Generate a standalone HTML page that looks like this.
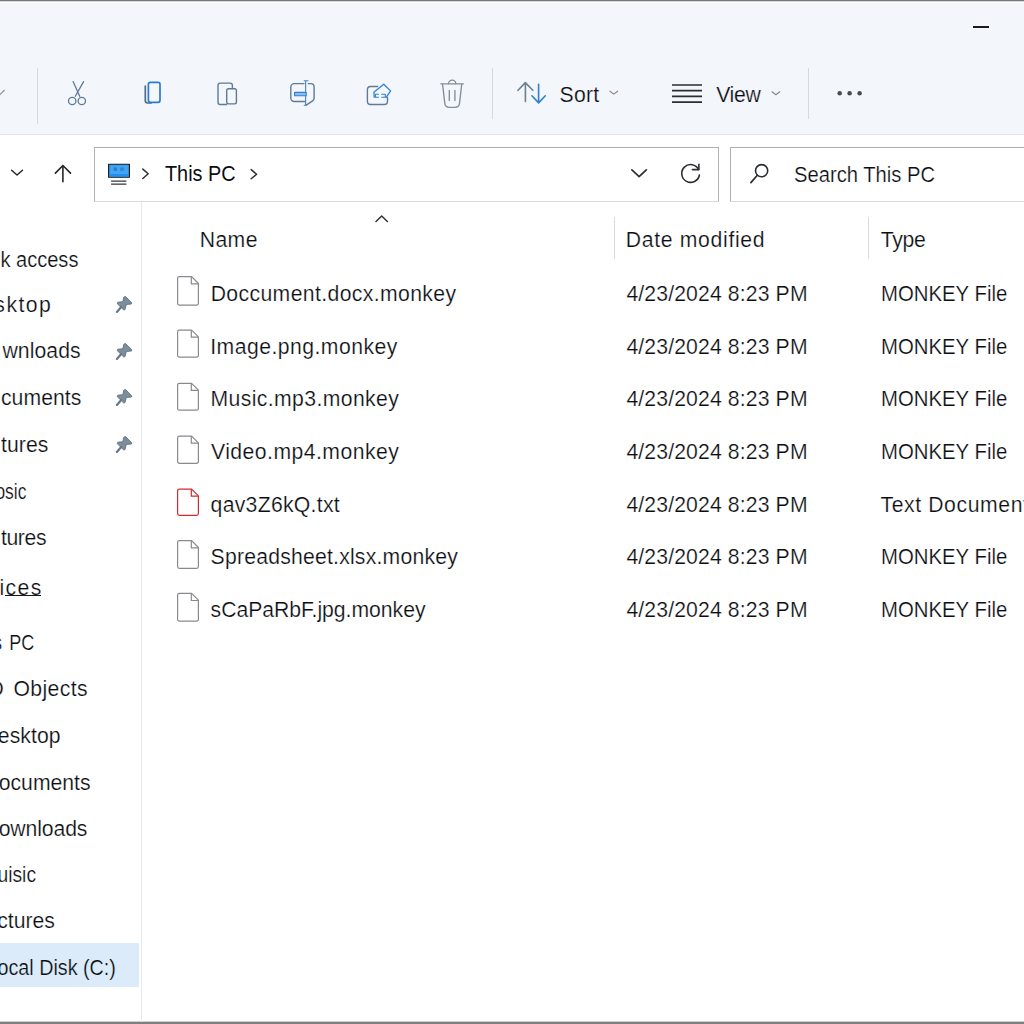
<!DOCTYPE html>
<html><head><meta charset="utf-8">
<style>
*{box-sizing:border-box;margin:0;padding:0}
html,body{width:1024px;height:1024px;overflow:hidden;background:#fff}
body{position:relative;font-family:"Liberation Sans",sans-serif;color:#0b0d11;font-size:21.2px}
.abs{position:absolute}
.t{position:absolute;white-space:nowrap;line-height:30px;height:30px;-webkit-text-stroke:0.22px #fff}
.tb{-webkit-text-stroke-color:#f3f6fb}
.ts{-webkit-text-stroke-color:#dcebf9}
.nb{-webkit-text-stroke:0}
#top{left:0;top:0;width:1024px;height:135px;background:#f3f6fb;border-bottom:1px solid #dfe4ec}
#topline{left:0;top:0;width:1024px;height:3px;background:linear-gradient(#777 0 1px,#d4d6d9 1px 2px,#fafbfd 2px 3px)}
#botline{left:0;top:1021px;width:1024px;height:3px;background:linear-gradient(#cfcfcf 0 1px,#7f7f7f 1px 3px)}
.vsep{position:absolute;width:1px;background:#d3d9e1;top:68px;height:51px}
#addr{left:94px;top:147px;width:625px;height:55px;border:1px solid #adb1b6;border-bottom-color:#d8dbde;background:#fff}
#search{left:730px;top:147px;width:320px;height:55px;border:1px solid #adb1b6;border-bottom-color:#d8dbde;background:#fff}
#sidesep{left:141px;top:202px;width:1px;height:820px;background:#e8e9ec}
.hsep{position:absolute;width:1px;background:#dadada;top:217px;height:42px}
#sel{left:0;top:943px;width:139px;height:44px;background:#dcebf9}
svg{position:absolute;overflow:visible}
</style></head><body>
<div id="top" class="abs"></div>
<div id="topline" class="abs"></div>
<div id="botline" class="abs"></div>
<div class="abs" style="left:973px;top:26px;width:16px;height:2px;background:#1b1b1b"></div>
<div class="vsep" style="left:37px;height:56px"></div>
<div class="vsep" style="left:492px"></div>
<div class="vsep" style="left:808px"></div>
<div id="addr" class="abs"></div>
<div id="search" class="abs"></div>
<div id="sidesep" class="abs"></div>
<div class="hsep" style="left:614px"></div>
<div class="hsep" style="left:868px"></div>
<div id="sel" class="abs"></div>
<div id="uline" class="abs" style="left:4.9px;top:595px;width:36px;height:1.3px;background:#15181d"></div>

<!-- toolbar: partial chevron at far left -->
<svg style="left:0;top:0" width="1024" height="140" viewBox="0 0 1024 140" fill="none" stroke-linecap="round" stroke-linejoin="round">
 <path d="M-2 96.5 L4.3 90.3" stroke="#8794a1" stroke-width="1.2"/>
 <!-- cut -->
 <g stroke="#5f7b96" stroke-width="1.3">
  <path d="M73.1 81.6 L79.7 96.2 M83.6 81.6 L75.3 96.2"/>
  <ellipse cx="72.2" cy="101" rx="3.7" ry="3.6"/><ellipse cx="81.8" cy="101" rx="3.7" ry="3.6"/>
 </g>
 <!-- copy -->
 <g>
  <path d="M145.3 86 V100.8 a2.2 2.2 0 0 0 2.2 2.2 H151" stroke="#526a82" stroke-width="1.7"/>
  <rect x="148.4" y="82.3" width="11.6" height="20" rx="2" stroke="#2b7bd4" stroke-width="1.7"/>
 </g>
 <!-- paste -->
 <g stroke="#5f7b96" stroke-width="1.4">
  <path d="M226.5 104.5 H220.2 a2.2 2.2 0 0 1 -2.2 -2.2 V85.3 a2.2 2.2 0 0 1 2.2 -2.2 H230.2 a2.2 2.2 0 0 1 2.2 2.2 V88.5"/>
  <rect x="226.7" y="88.7" width="9.7" height="15.2" rx="1.8"/>
 </g>
 <!-- rename -->
 <g stroke="#5f7b96" stroke-width="1.4">
  <path d="M304 83.6 H294.3 a3.5 3.5 0 0 0 -3.5 3.5 V98 a3.5 3.5 0 0 0 3.5 3.5 H304.8"/>
  <path d="M308.3 83.6 H310.8 a3.3 3.3 0 0 1 3.3 3.3 V98.3 Q314.1 99.8 312.6 100.8 L306.6 104.8"/>
  <path d="M305.6 80.7 V105.2 M304.2 80.7 H308 M304.2 105.2 H306.6" stroke="#4f82bb" stroke-width="1.1"/>
  <rect x="294.6" y="92.4" width="11.6" height="3.3" fill="#8fbcea" stroke="#2f7fd6" stroke-width="1.1"/>
 </g>
 <!-- share -->
 <g stroke="#5f7b96" stroke-width="1.4">
  <path d="M377.6 86.5 H370.6 a3.2 3.2 0 0 0 -3.2 3.2 V101.3 a3.2 3.2 0 0 0 3.2 3.2 H384.3 a3.2 3.2 0 0 0 3.2 -3.2 V97.5"/>
  <path d="M374.2 97.3 L373.9 92.2 L383.7 84.2 L390.6 90.9 L386.2 97.3" stroke="#2f80d4" stroke-width="1.3"/>
  <path d="M378.5 94.2 H375.4 V97.3 H378.5 M381.7 94.2 H385.3 V97.3 H381.7" stroke="#2f80d4" stroke-width="1.1"/>
 </g>
 <!-- delete -->
 <g stroke="#838d97" stroke-width="1.35">
  <path d="M440.8 83.8 H463.4"/>
  <path d="M448.6 83.5 a3.6 3.3 0 0 1 7.2 0"/>
  <path d="M442.6 84.5 L444.8 103.4 a4.3 4.1 0 0 0 4.3 3.9 H455.2 a4.3 4.1 0 0 0 4.3 -3.9 L461.7 84.5"/>
  <path d="M449.3 90.5 V100.5 M454.9 90.5 V100.5"/>
 </g>
 <!-- sort -->
 <g stroke-width="1.6">
  <path d="M525.4 101.6 V83 M518 90.3 L525.4 82.6 L532.8 90.3" stroke="#6e7f8e"/>
  <path d="M538.6 84.3 V102.6 M531.9 95.8 L538.6 102.9 L545.3 95.8" stroke="#2f80d2"/>
 </g>
 <path d="M610 91.2 L613.8 94.1 L617.6 91.2" stroke="#7e8893" stroke-width="1.1"/>
 <!-- view -->
 <g stroke="#2a2d33" stroke-width="1.7" stroke-linecap="butt">
  <path d="M672 85 H702 M672 90.7 H702 M672 96.4 H702 M672 102.2 H702"/>
 </g>
 <path d="M772 91.8 L775.9 94.8 L779.8 91.8" stroke="#7e8893" stroke-width="1.1"/>
 <!-- more -->
 <g fill="#474c54"><circle cx="839.7" cy="93.3" r="2.25"/><circle cx="849.6" cy="93.3" r="2.25"/><circle cx="859.6" cy="93.3" r="2.25"/></g>
</svg>
<!-- address row -->
<svg style="left:0;top:140px" width="1024" height="70" viewBox="0 140 1024 70" fill="none" stroke-linecap="round" stroke-linejoin="round">
 <path d="M11.6 170.3 L17 175 L22.5 170.3" stroke="#262626" stroke-width="1.5"/>
 <path d="M62.9 181.7 V165.6 M55.4 173.1 L62.9 165.5 L70.5 173.1" stroke="#262626" stroke-width="1.6"/>
 <!-- pc icon -->
 <rect x="108.6" y="164.3" width="20.8" height="13" fill="#2f9af0" stroke="#1c1614" stroke-width="1.1"/>
 <rect x="110.2" y="165.6" width="18" height="8.4" fill="#43a5f2"/>
 <rect x="109.2" y="174.3" width="19.6" height="2.4" fill="#1f8fec"/>
 <rect x="113.6" y="167.2" width="3.4" height="3.8" rx="1.2" fill="#1f7fdc"/><rect x="120" y="167.2" width="3.9" height="3.8" rx="1.2" fill="#2a88e0"/>
 <path d="M111.1 181 H126.4 M111.1 184.2 H126.4" stroke="#33363b" stroke-width="1.25" stroke-linecap="butt"/>
 <path d="M142.8 169.1 L148.2 173.8 L142.8 178.5" stroke="#2e3034" stroke-width="1.5"/>
 <path d="M251.2 169.6 L256.6 174.2 L251.2 178.8" stroke="#2e3034" stroke-width="1.5"/>
 <path d="M631.9 169.8 L639.1 176.6 L646.3 169.8" stroke="#2b2e33" stroke-width="1.7"/>
 <!-- refresh -->
 <path d="M698.6 169.5 A8.9 8.9 0 1 0 699.4 175" stroke="#2b2e33" stroke-width="1.6"/>
 <path d="M692.4 169.6 H698.9 V164.3" stroke="#2b2e33" stroke-width="1.6"/>
 <!-- search -->
 <circle cx="761.6" cy="170.7" r="6.1" stroke="#2b2e33" stroke-width="1.6"/>
 <path d="M757.3 175.3 L750.9 182.6" stroke="#2b2e33" stroke-width="1.7"/>
</svg>
<!-- header caret -->
<svg style="left:370px;top:210px" width="24" height="16" viewBox="370 210 24 16" fill="none" stroke-linecap="round" stroke-linejoin="round">
 <path d="M376 221.5 L381.7 216 L387.4 221.5" stroke="#333" stroke-width="1.5"/>
</svg>

<svg style="left:0;top:0" width="1024" height="1024" viewBox="0 0 1024 1024" fill="none" stroke-width="1.2" stroke-linejoin="round"><path d="M179.4 276.7 H191.6 L198.4 283.5 V303.3 a1.8 1.8 0 0 1 -1.8 1.8 H179.4 a1.8 1.8 0 0 1 -1.8 -1.8 V278.5 a1.8 1.8 0 0 1 1.8 -1.8 Z" fill="#fff" stroke="#878a8e"/><path d="M191.3 276.9 V283.8 H198.2" stroke="#878a8e"/>
<path d="M179.4 330.1 H191.6 L198.4 336.9 V355.4 a1.8 1.8 0 0 1 -1.8 1.8 H179.4 a1.8 1.8 0 0 1 -1.8 -1.8 V331.9 a1.8 1.8 0 0 1 1.8 -1.8 Z" fill="#fff" stroke="#878a8e"/><path d="M191.3 330.3 V337.2 H198.2" stroke="#878a8e"/>
<path d="M179.4 383.3 H191.6 L198.4 390.1 V408.4 a1.8 1.8 0 0 1 -1.8 1.8 H179.4 a1.8 1.8 0 0 1 -1.8 -1.8 V385.1 a1.8 1.8 0 0 1 1.8 -1.8 Z" fill="#fff" stroke="#878a8e"/><path d="M191.3 383.5 V390.4 H198.2" stroke="#878a8e"/>
<path d="M179.4 436.1 H191.6 L198.4 442.9 V461.5 a1.8 1.8 0 0 1 -1.8 1.8 H179.4 a1.8 1.8 0 0 1 -1.8 -1.8 V437.9 a1.8 1.8 0 0 1 1.8 -1.8 Z" fill="#fff" stroke="#878a8e"/><path d="M191.3 436.3 V443.2 H198.2" stroke="#878a8e"/>
<path d="M179.4 489.1 H191.6 L198.4 495.9 V513.5 a1.8 1.8 0 0 1 -1.8 1.8 H179.4 a1.8 1.8 0 0 1 -1.8 -1.8 V490.9 a1.8 1.8 0 0 1 1.8 -1.8 Z" fill="#fff" stroke="#cf2a2e"/><path d="M191.3 489.3 V496.2 H198.2" stroke="#cf2a2e"/>
<path d="M179.4 540.7 H191.6 L198.4 547.5 V566.5 a1.8 1.8 0 0 1 -1.8 1.8 H179.4 a1.8 1.8 0 0 1 -1.8 -1.8 V542.5 a1.8 1.8 0 0 1 1.8 -1.8 Z" fill="#fff" stroke="#878a8e"/><path d="M191.3 540.9 V547.8 H198.2" stroke="#878a8e"/>
<path d="M179.4 593.4 H191.6 L198.4 600.2 V619.4 a1.8 1.8 0 0 1 -1.8 1.8 H179.4 a1.8 1.8 0 0 1 -1.8 -1.8 V595.2 a1.8 1.8 0 0 1 1.8 -1.8 Z" fill="#fff" stroke="#878a8e"/><path d="M191.3 593.6 V600.5 H198.2" stroke="#878a8e"/></svg>
<svg style="left:115px;top:296.2px" width="18" height="18" viewBox="0 0 18 18"><path d="M9.3 0.8 L10.6 0.6 L16.8 7 L16.4 8 L11.3 8.4 L10 13.6 L8.8 14 L2.2 7.6 L2.8 6.2 L7.8 5.8 L8.8 1.4 Z" fill="#7d8e9b" stroke="#5c7080" stroke-width="0.9" stroke-linejoin="round"/><path d="M6.2 11 L1.9 15.9" stroke="#64788a" stroke-width="2.2" stroke-linecap="round"/></svg>
<svg style="left:115px;top:342.6px" width="18" height="18" viewBox="0 0 18 18"><path d="M9.3 0.8 L10.6 0.6 L16.8 7 L16.4 8 L11.3 8.4 L10 13.6 L8.8 14 L2.2 7.6 L2.8 6.2 L7.8 5.8 L8.8 1.4 Z" fill="#7d8e9b" stroke="#5c7080" stroke-width="0.9" stroke-linejoin="round"/><path d="M6.2 11 L1.9 15.9" stroke="#64788a" stroke-width="2.2" stroke-linecap="round"/></svg>
<svg style="left:115px;top:389.1px" width="18" height="18" viewBox="0 0 18 18"><path d="M9.3 0.8 L10.6 0.6 L16.8 7 L16.4 8 L11.3 8.4 L10 13.6 L8.8 14 L2.2 7.6 L2.8 6.2 L7.8 5.8 L8.8 1.4 Z" fill="#7d8e9b" stroke="#5c7080" stroke-width="0.9" stroke-linejoin="round"/><path d="M6.2 11 L1.9 15.9" stroke="#64788a" stroke-width="2.2" stroke-linecap="round"/></svg>
<svg style="left:115px;top:435.7px" width="18" height="18" viewBox="0 0 18 18"><path d="M9.3 0.8 L10.6 0.6 L16.8 7 L16.4 8 L11.3 8.4 L10 13.6 L8.8 14 L2.2 7.6 L2.8 6.2 L7.8 5.8 L8.8 1.4 Z" fill="#7d8e9b" stroke="#5c7080" stroke-width="0.9" stroke-linejoin="round"/><path d="M6.2 11 L1.9 15.9" stroke="#64788a" stroke-width="2.2" stroke-linecap="round"/></svg>
<div class="t tb" style="left:559.6px;top:79.75px;letter-spacing:0.21px">Sort</div>
<div class="t tb" style="left:716.2px;top:79.75px;letter-spacing:-0.313px">View</div>
<div class="t nb" style="left:165.2px;top:159.25px;transform:scaleX(0.9368);transform-origin:0 0">This PC</div>
<div class="t" style="left:793.8px;top:159.75px;transform:scaleX(0.953);transform-origin:0 0">Search This PC</div>
<div class="t" style="left:199.7px;top:224.75px;letter-spacing:0.422px">Name</div>
<div class="t" style="left:625.8px;top:224.75px;letter-spacing:0.672px">Date modified</div>
<div class="t" style="left:880.8px;top:224.75px;letter-spacing:-0.35px">Type</div>
<div class="t" style="left:210.7px;top:278.75px;letter-spacing:0.376px">Doccument.docx.monkey</div>
<div class="t" style="left:626.4px;top:278.75px;letter-spacing:0.131px">4/23/2024 8:23 PM</div>
<div class="t" style="left:880.64px;top:278.75px;transform:scaleX(0.9603);transform-origin:0 0">MONKEY File</div>
<div class="t" style="left:210.2px;top:331.75px;letter-spacing:0.466px">Image.png.monkey</div>
<div class="t" style="left:626.4px;top:331.75px;letter-spacing:0.131px">4/23/2024 8:23 PM</div>
<div class="t" style="left:880.64px;top:331.75px;transform:scaleX(0.9603);transform-origin:0 0">MONKEY File</div>
<div class="t" style="left:210.6px;top:383.75px;letter-spacing:0.379px">Music.mp3.monkey</div>
<div class="t" style="left:626.4px;top:383.75px;letter-spacing:0.131px">4/23/2024 8:23 PM</div>
<div class="t" style="left:880.64px;top:383.75px;transform:scaleX(0.9603);transform-origin:0 0">MONKEY File</div>
<div class="t" style="left:211px;top:436.75px;letter-spacing:0.454px">Video.mp4.monkey</div>
<div class="t" style="left:626.4px;top:436.75px;letter-spacing:0.131px">4/23/2024 8:23 PM</div>
<div class="t" style="left:880.64px;top:436.75px;transform:scaleX(0.9603);transform-origin:0 0">MONKEY File</div>
<div class="t" style="left:210.6px;top:489.75px;letter-spacing:0.281px">qav3Z6kQ.txt</div>
<div class="t" style="left:626.4px;top:489.75px;letter-spacing:0.131px">4/23/2024 8:23 PM</div>
<div class="t" style="left:880.5px;top:489.75px;letter-spacing:0.59px">Text Document</div>
<div class="t" style="left:210.6px;top:541.75px;letter-spacing:0.209px">Spreadsheet.xlsx.monkey</div>
<div class="t" style="left:626.4px;top:541.75px;letter-spacing:0.131px">4/23/2024 8:23 PM</div>
<div class="t" style="left:880.64px;top:541.75px;transform:scaleX(0.9603);transform-origin:0 0">MONKEY File</div>
<div class="t" style="left:210.6px;top:594.75px;letter-spacing:-0.034px">sCaPaRbF.jpg.monkey</div>
<div class="t" style="left:626.4px;top:594.75px;letter-spacing:0.131px">4/23/2024 8:23 PM</div>
<div class="t" style="left:880.64px;top:594.75px;transform:scaleX(0.9603);transform-origin:0 0">MONKEY File</div>
<div class="t" style="right:945.54px;top:244.75px;transform:scaleX(0.9464);transform-origin:100% 0">k access</div>
<div class="t" style="right:971.64px;top:289.75px;letter-spacing:1.479px">sktop</div>
<div class="t" style="right:943.33px;top:336.25px;letter-spacing:0.076px">wnloads</div>
<div class="t" style="right:942.54px;top:382.75px;letter-spacing:0.07px">cuments</div>
<div class="t" style="right:975.51px;top:429.75px;letter-spacing:0.098px">tures</div>
<div class="t" style="right:997.43px;top:476.75px;transform:scaleX(0.8213);transform-origin:100% 0">Mosic</div>
<div class="t" style="right:977.76px;top:522.75px;letter-spacing:-0.352px">tures</div>
<div class="t" style="right:981.19px;top:572.75px;letter-spacing:1.411px">Devices</div>
<div class="t" style="right:990.04px;top:627.75px;transform:scaleX(0.8531);transform-origin:100% 0">s<span style="margin-right:2.5px"> </span>PC</div>
<div class="t" style="right:936.01px;top:673.75px;letter-spacing:0.394px">D<span style="margin-right:3px"> </span>Objects</div>
<div class="t" style="right:963.36px;top:720.75px;letter-spacing:0.061px">Desktop</div>
<div class="t" style="right:933.4px;top:767.75px;letter-spacing:0.003px">Documents</div>
<div class="t" style="right:936.71px;top:813.75px;letter-spacing:-0.107px">Downloads</div>
<div class="t" style="right:988.17px;top:859.75px;transform:scaleX(0.9098);transform-origin:100% 0">Muisic</div>
<div class="t" style="right:969.23px;top:905.75px;letter-spacing:-0.027px">Pictures</div>
<div class="t ts" style="right:907.62px;top:952.75px;transform:scaleX(0.9318);transform-origin:100% 0">Local Disk (C:)</div>
</body></html>
